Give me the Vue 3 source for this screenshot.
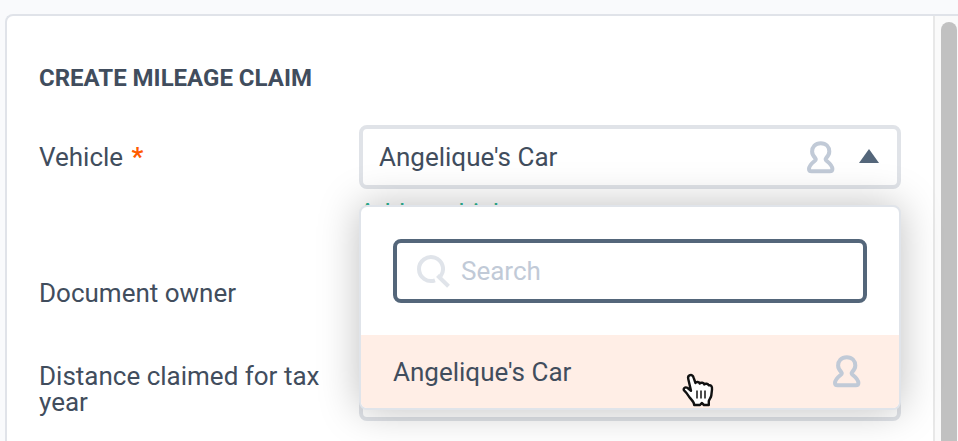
<template>
  <div class="page">
    <div class="panel">
      <form class="claim-form" @submit.prevent>
        <h1 class="title">Create mileage claim</h1>

        <div class="row vehicle-row">
          <label class="label">Vehicle <span class="required">*</span></label>
          <div class="field">
            <div class="select" @click="open = !open">
              <span class="value">{{ selected }}</span>
              <svg class="person" viewBox="0 0 28 33">
                <path :d="personPath" />
              </svg>
              <svg class="arrow" viewBox="0 0 20 14">
                <path d="M10 0L20 14H0Z" />
              </svg>
            </div>
            <a class="add-link">Add a vehicle</a>

            <div v-if="open" class="dropdown">
              <div class="search">
                <svg class="search-icon" viewBox="0 0 34 34">
                  <path d="M18 26.3A12 12 0 1 1 23.6 22.2" />
                  <path d="M20.5 21.5L31.5 32.3" />
                </svg>
                <input v-model="query" class="search-input" type="text" placeholder="Search" />
              </div>
              <div v-for="v in filtered" :key="v" class="option" @click="pick(v)">
                <span class="value">{{ v }}</span>
                <svg class="person" viewBox="0 0 28 33">
                  <path :d="personPath" />
                </svg>
              </div>
              <!-- hand pointer over the option -->
              <svg class="pointer" viewBox="0 0 32 36">
                <path
                  class="hand"
                  d="M8 3.2C9.8 2.6 11 3.6 11.5 5.4L13.5 11C14.3 9.6 17.2 9.6 17.8 11.6C18.8 10.2 21.8 10.6 22.3 12.4C23.5 11.2 26 11.6 26.7 13.4C29 12.9 30.3 14.4 30 17.5L29.3 23.5C29 25.7 27.3 27 26.8 29V33H22L19.8 31L18 33H12.2C12.3 30 9.5 28 7.5 25.3C5.8 22.8 4.8 21 2.3 18.7C0.5 16.8 3 14.5 5.3 15.8L9 18.7L6.2 6.8C5.8 5 6.3 3.8 8 3.2Z"
                />
                <path class="lines" d="M15 18.5V26.5M19 18.5V26.5M23 18.5V26.5" />
              </svg>
            </div>
          </div>
        </div>

        <div class="row owner-row">
          <label class="label">Document owner</label>
        </div>

        <div class="row distance-row">
          <label class="label">Distance claimed for tax year</label>
          <div class="field">
            <div class="select"></div>
          </div>
        </div>
      </form>

      <div class="scrollbar">
        <div class="thumb"></div>
      </div>
    </div>
  </div>
</template>

<script setup>
import { ref, computed } from 'vue'

const vehicles = ["Angelique's Car"]
const selected = ref(vehicles[0])
const open = ref(true)
const query = ref('')

const personPath =
  'M13.7 2.2C8.3 2.2 5.1 5.8 5.1 10.6C5.1 13.4 6.6 15.4 8.2 17C9.1 18 9 18.9 7.6 20C4.6 22.4 2 25 2 28C2 29.6 2.9 30.2 4.6 30.2H22.8C24.5 30.2 25.4 29.6 25.4 28C25.4 25 22.8 22.4 19.8 20C18.4 18.9 18.3 18 19.2 17C20.8 15.4 22.3 13.4 22.3 10.6C22.3 5.8 19.1 2.2 13.7 2.2Z'

const filtered = computed(() =>
  vehicles.filter((v) => v.toLowerCase().includes(query.value.toLowerCase()))
)

const pick = (v) => {
  selected.value = v
  open.value = false
}
</script>

<style>
body {
  overflow: hidden;
}
</style>

<style scoped>
.page {
  box-sizing: border-box;
  height: 441px;
  padding: 14px 0 0 5px;
  overflow: hidden;
  background: #f9fafc;
  color: #414d5d;
  font-family: Roboto, sans-serif;
  font-size: 26px;
  line-height: 26px;
}

.panel {
  display: flex;
  box-sizing: border-box;
  height: 460px;
  border-top: 2px solid #e0e3e9;
  border-left: 2px solid #e0e3e9;
  border-radius: 8px 0 0 0;
  background: #fff;
}

.claim-form {
  flex: 1;
  padding: 47px 32px 0;
}

.title {
  margin: 0;
  font-size: 24px;
  line-height: 30px;
  font-weight: 700;
  text-transform: uppercase;
}

.row {
  display: flex;
  align-items: flex-start;
}

.label {
  box-sizing: border-box;
  width: 320px;
  padding-right: 20px;
}

.required {
  margin-left: 2px;
  color: #ff5a00;
  font-weight: 700;
}

.field {
  position: relative;
  width: 542px;
}

.vehicle-row {
  height: 136px;
  margin-top: 32px;
}

.vehicle-row .label,
.owner-row .label {
  padding-top: 19px;
}

.owner-row {
  height: 96px;
}

.distance-row .label {
  padding-top: 6px;
}

.select {
  display: flex;
  align-items: center;
  box-sizing: border-box;
  height: 64px;
  padding: 0 18px 0 16px;
  border: 4px solid #e0e3e8;
  border-radius: 8px;
  background: #fff;
}

.value {
  flex: 1;
}

.person {
  width: 28px;
  height: 33px;
  fill: none;
  stroke: #c1cad7;
  stroke-width: 4;
}

.arrow {
  width: 20px;
  height: 14px;
  margin: 0 0 2px 24px;
  fill: #54667a;
}

.add-link {
  display: block;
  margin-top: 11px;
  color: #2fb594;
}

/* Open list, drawn over the rows below */
.dropdown {
  position: absolute;
  z-index: 2;
  top: 80px;
  left: 0;
  box-sizing: border-box;
  width: 542px;
  height: 205px;
  border: 2px solid #e0e4ea;
  border-radius: 8px;
  background: #fff;
  box-shadow: 0 0 40px rgba(0, 0, 0, 0.25);
}

.search {
  display: flex;
  align-items: center;
  box-sizing: border-box;
  height: 64px;
  margin: 32px;
  padding: 0 20px;
  border: 4px solid #54667a;
  border-radius: 8px;
}

.search-icon {
  width: 34px;
  height: 34px;
  fill: none;
  stroke: #e0e4ea;
  stroke-width: 4;
}

.search-input {
  flex: 1;
  min-width: 0;
  margin-left: 10px;
  padding: 0;
  border: 0;
  outline: 0;
  background: none;
  color: inherit;
  font: inherit;
}

.search-input::placeholder {
  color: #c1cad7;
  opacity: 1;
}

.option {
  display: flex;
  align-items: center;
  height: 73px;
  padding: 0 38px 0 32px;
  border-radius: 0 0 6px 6px;
  background: #ffeee6;
}

.pointer {
  position: absolute;
  top: 165px;
  left: 321px;
  width: 32px;
  height: 36px;
}

.hand {
  fill: #fff;
  stroke: #111;
  stroke-width: 2.4;
  stroke-linejoin: round;
}

.lines {
  fill: none;
  stroke: #222;
  stroke-width: 1.6;
}

.scrollbar {
  box-sizing: border-box;
  width: 25px;
  padding: 6px 1px 0 6px;
  border-left: 2px solid #e8e8e8;
  background: #fafafa;
}

.thumb {
  height: 460px;
  border-radius: 8px;
  background: #c1c1c1;
}
</style>
